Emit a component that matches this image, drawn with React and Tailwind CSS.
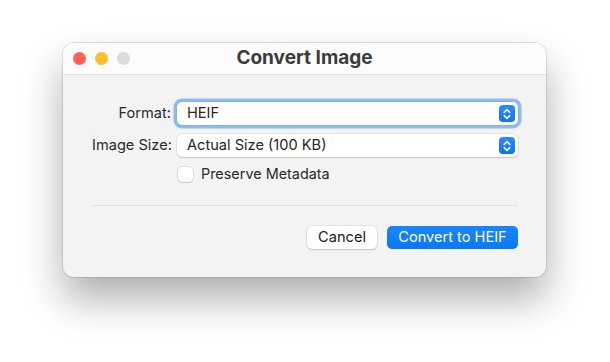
import React from "react";

function Stepper() {
  return (
    <div className="w-[16px] h-[17px] rounded-[4px] bg-gradient-to-b from-[#2a8cff] to-[#0a75f2] flex items-center justify-center">
      <svg width="8" height="12" viewBox="0 0 8 12" fill="none">
        <path d="M1.2 4.4 L4 1.6 L6.8 4.4" stroke="white" strokeWidth="1.5" strokeLinecap="round" strokeLinejoin="round" />
        <path d="M1.2 7.6 L4 10.4 L6.8 7.6" stroke="white" strokeWidth="1.5" strokeLinecap="round" strokeLinejoin="round" />
      </svg>
    </div>
  );
}

function Select({ value, focused }) {
  return (
    <div
      className={
        "h-[23px] rounded-[5px] bg-white flex items-center justify-between pl-[10px] pr-[3px] " +
        (focused
          ? "shadow-[0_0_0_3.5px_rgba(60,140,235,0.55),0_0_0_0.5px_rgba(0,0,0,0.2)]"
          : "shadow-[0_0_0_0.5px_rgba(0,0,0,0.12),0_1px_1.5px_rgba(0,0,0,0.12)]")
      }
    >
      <span className="text-[14.6px] text-[#262626] leading-none">{value}</span>
      <Stepper />
    </div>
  );
}

export default function App() {
  return (
    <div className="w-[610px] h-[362px] bg-white overflow-hidden pl-[63px] pt-[43px]" style={{ fontFamily: "Inter, 'Noto Sans', sans-serif" }}>
      <div className="w-[483px] h-[234px] rounded-[11px] bg-[#f3f3f3] shadow-[0_22px_40px_rgba(0,0,0,0.32),0_0_0_1px_rgba(0,0,0,0.1)] overflow-hidden flex flex-col">
        <div className="h-[32px] bg-[#fcfcfc] border-b border-[#e2e2e2] flex items-center relative">
          <div className="flex items-center gap-[9px] pl-[10px]">
            <div className="w-[13px] h-[13px] rounded-full bg-[#fe5f57]" />
            <div className="w-[13px] h-[13px] rounded-full bg-[#febc2e]" />
            <div className="w-[13px] h-[13px] rounded-full bg-[#dcdcdc]" />
          </div>
          <div className="absolute inset-0 flex items-center justify-center text-[19px] font-bold text-[#3b3b3b] pointer-events-none">
            Convert Image
          </div>
        </div>
        <div className="flex-1 flex flex-col pt-[27px] pl-[29px] pr-[28px]">
          <div className="grid grid-cols-[79px_1fr] gap-x-[6px] gap-y-[9px] items-center">
            <div className="text-right text-[14.6px] text-[#2a2a2a]">Format:</div>
            <Select value="HEIF" focused />
            <div className="text-right text-[14.6px] text-[#2a2a2a] whitespace-nowrap">Image Size:</div>
            <Select value="Actual Size (100 KB)" />
            <div />
            <div className="flex items-center gap-[8px] h-[16px] pl-[1px]">
              <div className="w-[15px] h-[15px] rounded-[4px] bg-white shadow-[0_0_0_0.5px_rgba(0,0,0,0.2),0_1px_1px_rgba(0,0,0,0.1)]" />
              <span className="text-[14.4px] leading-none text-[#2a2a2a]">Preserve Metadata</span>
            </div>
          </div>
          <div className="h-px bg-[#dedede] mt-[23px]" />
          <div className="flex justify-end gap-[10px] mt-[20px]">
            <button className="h-[23px] w-[70px] rounded-[5px] bg-white text-[14.6px] text-[#222] shadow-[0_0_0_0.5px_rgba(0,0,0,0.12),0_1px_1.5px_rgba(0,0,0,0.15)] flex items-center justify-center">
              Cancel
            </button>
            <button className="h-[23px] w-[131px] rounded-[5px] bg-gradient-to-b from-[#1a86fb] to-[#0a78f2] text-[14.6px] text-white flex items-center justify-center">
              Convert to HEIF
            </button>
          </div>
        </div>
      </div>
    </div>
  );
}
